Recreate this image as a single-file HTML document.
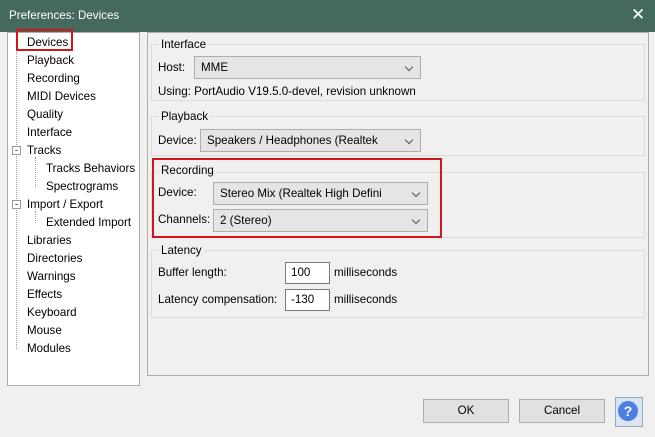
<!DOCTYPE html><html><head><style>
body{margin:0;width:655px;height:437px;background:#f0f0f0;font-family:"Liberation Sans",sans-serif;font-size:11.6px;color:#000;position:relative;overflow:hidden}
.a{position:absolute}
.title{left:0;top:0;width:655px;height:32px;background:#46695d;color:#fff;font-size:12px}
.tree{left:7px;top:32px;width:133px;height:354px;background:#fff;border:1px solid #adadad;box-sizing:border-box}
.tree div{position:absolute;white-space:nowrap}
.tree .h{width:8px;height:0;border-top:1px dotted #999}
.panel{left:147px;top:32px;width:502px;height:344px;border:1px solid #adadad;background:#f0f0f0;box-sizing:border-box}
.grp{border:1px solid #dcdcdc;box-sizing:border-box}
.cb{background:#e5e5e5;border:1px solid #adadad;box-sizing:border-box;height:23px;padding:4px 6px;white-space:nowrap}
.cb:after{content:"";position:absolute;right:8px;top:7px;width:5px;height:5px;border-right:1px solid #555;border-bottom:1px solid #555;transform:rotate(45deg)}
.tb{background:#fff;border:1px solid #7a7a7a;box-sizing:border-box;height:22px;padding:3px 5px}
.btn{background:#e1e1e1;border:1px solid #adadad;box-sizing:border-box;height:24px;text-align:center;line-height:22px}
</style></head><body>
<div class="a title"><span class="a" style="left:9px;top:9px;font-size:11.6px">Preferences: Devices</span><span class="a" style="left:631px;top:5px;font-size:17px">✕</span></div>
<div class="a tree">
<div style="left:19px;top:3px">Devices</div>
<div style="left:19px;top:21px">Playback</div>
<div style="left:19px;top:39px">Recording</div>
<div style="left:19px;top:57px">MIDI Devices</div>
<div style="left:19px;top:75px">Quality</div>
<div style="left:19px;top:93px">Interface</div>
<div style="left:4px;top:113px;width:7px;height:7px;border:1px solid #999;font-size:9px;line-height:6px;text-align:center;background:#fff;z-index:1">-</div>
<div style="left:19px;top:111px">Tracks</div>
<div style="left:38px;top:129px">Tracks Behaviors</div>
<div style="left:38px;top:147px">Spectrograms</div>
<div style="left:4px;top:167px;width:7px;height:7px;border:1px solid #999;font-size:9px;line-height:6px;text-align:center;background:#fff;z-index:1">-</div>
<div style="left:19px;top:165px">Import / Export</div>
<div style="left:38px;top:183px">Extended Import</div>
<div style="left:19px;top:201px">Libraries</div>
<div style="left:19px;top:219px">Directories</div>
<div style="left:19px;top:237px">Warnings</div>
<div style="left:19px;top:255px">Effects</div>
<div style="left:19px;top:273px">Keyboard</div>
<div style="left:19px;top:291px">Mouse</div>
<div style="left:19px;top:309px">Modules</div>
<div style="left:8px;top:8px;width:0;height:308px;border-left:1px dotted #999"></div>
<div style="left:27px;top:124px;width:0;height:30px;border-left:1px dotted #999"></div>
<div style="left:27px;top:178px;width:0;height:12px;border-left:1px dotted #999"></div>
</div>
<div class="a" style="left:16px;top:29px;width:57px;height:22px;border:2px solid #d2141b;box-sizing:border-box"></div>
<div class="a panel"></div>
<div class="a grp" style="left:151px;top:44px;width:494px;height:57px"></div>
<span class="a" style="left:159px;top:38px;background:#f0f0f0;padding:0 2px">Interface</span>
<span class="a" style="left:158px;top:61px">Host:</span>
<div class="a cb" style="left:194px;top:56px;width:227px">MME</div>
<span class="a" style="left:158px;top:85px">Using: PortAudio V19.5.0-devel, revision unknown</span>
<div class="a grp" style="left:151px;top:116px;width:494px;height:40px"></div>
<span class="a" style="left:159px;top:110px;background:#f0f0f0;padding:0 2px">Playback</span>
<span class="a" style="left:158px;top:134px">Device:</span>
<div class="a cb" style="left:200px;top:129px;width:221px">Speakers / Headphones (Realtek</div>
<div class="a grp" style="left:151px;top:172px;width:494px;height:66px"></div>
<span class="a" style="left:159px;top:164px;background:#f0f0f0;padding:0 2px">Recording</span>
<span class="a" style="left:158px;top:186px">Device:</span>
<div class="a cb" style="left:213px;top:182px;width:215px">Stereo Mix (Realtek High Defini</div>
<span class="a" style="left:158px;top:213px">Channels:</span>
<div class="a cb" style="left:213px;top:209px;width:215px">2 (Stereo)</div>
<div class="a" style="left:152px;top:158px;width:290px;height:80px;border:2px solid #d2141b;box-sizing:border-box"></div>
<div class="a grp" style="left:151px;top:250px;width:494px;height:68px"></div>
<span class="a" style="left:159px;top:244px;background:#f0f0f0;padding:0 2px">Latency</span>
<span class="a" style="left:158px;top:266px">Buffer length:</span>
<div class="a tb" style="left:285px;top:262px;width:45px">100</div>
<span class="a" style="left:334px;top:266px">milliseconds</span>
<span class="a" style="left:158px;top:293px">Latency compensation:</span>
<div class="a tb" style="left:285px;top:289px;width:45px">-130</div>
<span class="a" style="left:334px;top:293px">milliseconds</span>
<div class="a btn" style="left:423px;top:399px;width:86px">OK</div>
<div class="a btn" style="left:519px;top:399px;width:86px">Cancel</div>
<div class="a" style="left:615px;top:397px;width:26px;height:28px;background:#d9e6f2;border:1px solid #9ab"></div>
<div class="a" style="left:618px;top:401px;width:20px;height:20px;border-radius:50%;background:#4d7fe0;color:#fff;text-align:center;line-height:20px;font-weight:bold;font-size:14px">?</div>
</body></html>
